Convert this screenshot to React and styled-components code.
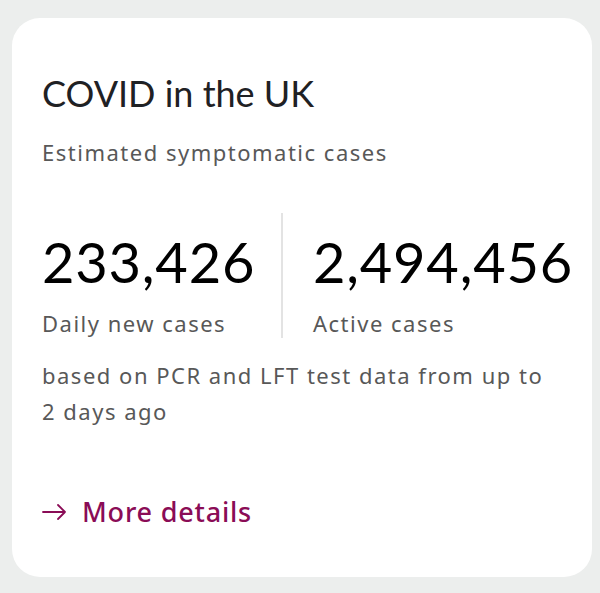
import React from "react";
import styled, { createGlobalStyle } from "styled-components";

const Global = createGlobalStyle`
  html, body { margin: 0; padding: 0; background: #eceeed; }
  body { font-family: Lato, "Noto Sans", sans-serif; }
`;

const Page = styled.div`
  padding: 18px 8px 16px 12px;
`;

const Card = styled.section`
  width: 580px;
  height: 559px;
  box-sizing: border-box;
  background: #ffffff;
  border-radius: 28px;
  padding: 0 30px;
  display: flex;
  flex-direction: column;
`;

const Title = styled.h2`
  margin: 53px 0 0;
  font-size: 36px;
  font-weight: 400;
  line-height: 44px;
  color: #1f2124;
`;

const BodyText = styled.p`
  margin: ${(p) => p.$mt || "0"} 0 0;
  font-family: "Noto Sans", sans-serif;
  font-size: 22px;
  line-height: ${(p) => p.$lh || "30px"};
  letter-spacing: 1.5px;
  color: #585858;
`;

const Stats = styled.div`
  margin-top: 46px;
  display: grid;
  grid-template-columns: 239px 1fr;
`;

const Stat = styled.div`
  display: flex;
  flex-direction: column;
  padding-left: ${(p) => (p.$divided ? "30px" : "0")};
  border-left: ${(p) => (p.$divided ? "2px solid #e3e3e3" : "none")};
  height: 125px;
  justify-content: flex-end;
`;

const Number = styled.div`
  font-size: 56px;
  line-height: 60px;
  color: #000;
  letter-spacing: 0.8px;
`;

const MoreLink = styled.a`
  margin-top: 64px;
  display: flex;
  align-items: center;
  gap: 16px;
  font-family: "Noto Sans", sans-serif;
  font-size: 27px;
  font-weight: 500;
  letter-spacing: 0.8px;
  color: #8a0c56;
  text-decoration: none;
`;

const Arrow = () => (
  <svg width="24" height="16" viewBox="0 0 24 16" fill="none" stroke="#8a0c56" strokeWidth="1.8" strokeLinecap="round" strokeLinejoin="round">
    <path d="M1 8h22M16 1l7 7-7 7" />
  </svg>
);

export default function App() {
  return (
    <Page>
      <Global />
      <Card>
        <Title>COVID in the UK</Title>
        <BodyText $mt="22px">Estimated symptomatic cases</BodyText>
        <Stats>
          <Stat>
            <Number>233,426</Number>
            <BodyText $mt="16px">Daily new cases</BodyText>
          </Stat>
          <Stat $divided>
            <Number>2,494,456</Number>
            <BodyText $mt="16px">Active cases</BodyText>
          </Stat>
        </Stats>
        <BodyText $mt="19px" $lh="36px">
          based on PCR and LFT test data from up to 2 days ago
        </BodyText>
        <MoreLink href="#">
          <Arrow />
          More details
        </MoreLink>
      </Card>
    </Page>
  );
}
